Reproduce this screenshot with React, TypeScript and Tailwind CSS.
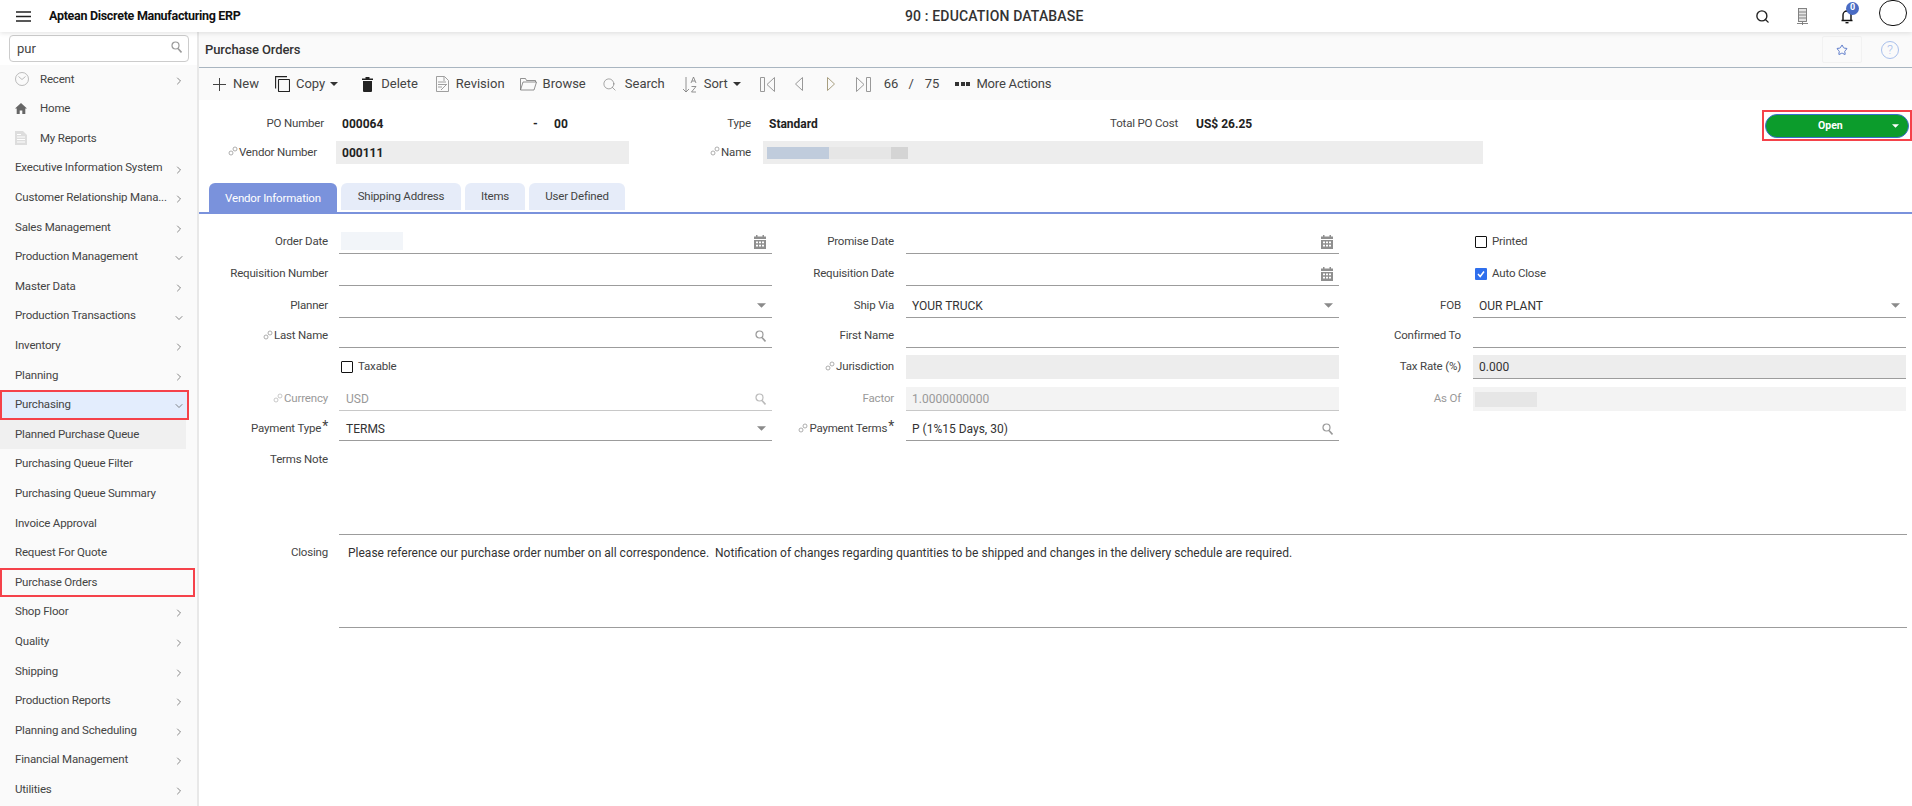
import React from "react";
import { Search, ChevronRight, ChevronDown, Star } from "lucide-react";

const Link = ({ c = "#9a9a9a" }: { c?: string }) => (
  <svg width="10" height="10" viewBox="0 0 10 10" className="mr-px mb-[3px] shrink-0" fill="none" stroke={c} strokeWidth="0.8">
    <circle cx="3" cy="7" r="2" />
    <circle cx="7" cy="3" r="2" />
  </svg>
);
const Caret = ({ c = "#333", className = "" }: { c?: string; className?: string }) => (
  <svg width="8" height="4" viewBox="0 0 8 4" className={className}><path d="M0 0h8L4 4z" fill={c} /></svg>
);
const Cal = () => (
  <svg width="12" height="14" viewBox="0 0 12 14" fill="#8f8f8f">
    <path d="M2 0h1.5v2H2zM8.500 0H10v2H8.500zM0 1.500h12V4H0zM0 5h12v9H0z" />
    <path d="M2 6.500h2v1.800H2zM5 6.500h2v1.800H5zM8 6.500h2v1.800H8zM2 9.800h2v1.800H2zM5 9.800h2v1.800H5zM8 9.800h2v1.800H8z" fill="#fff" />
  </svg>
);
const Drop = () => <Caret c="#8a8a8a" className="w-[9px] h-[5px]" />;
const Mag = ({ c = "#9a9a9a" }: { c?: string }) => (
  <svg width="11" height="12" viewBox="0 0 11 12" fill="none" stroke={c} strokeWidth="1.200"><circle cx="4.500" cy="4.500" r="3.500" /><path d="M7 7.500l3.500 4" strokeWidth="1.600" /></svg>
);

type Row = { t: string; arrow?: "r" | "d"; icon?: React.ReactNode; cls?: string };
const Clock = () => (
  <svg width="14" height="14" viewBox="0 0 14 14" fill="none" stroke="#aaa" strokeWidth="0.8"><circle cx="7" cy="7" r="6.500" /><path d="M3.500 4.500L7 7.500l3.500-3" /></svg>
);
const HomeI = () => (
  <svg width="12" height="11" viewBox="0 0 12 11" fill="#666"><path d="M6 0L0 5.500h1.700V11h3V7.500h2.600V11h3V5.500H12z" /></svg>
);
const Rep = () => (
  <svg width="12" height="14" viewBox="0 0 12 14"><path d="M0 0h8l4 4v10H0z" fill="#ddd" /><path d="M2 6h8M2 8.500h8M2 11h8M2 3.500h4" stroke="#fff" /></svg>
);
const rows: Row[] = [
  { t: "Recent", arrow: "r", icon: <Clock /> },
  { t: "Home", icon: <HomeI /> },
  { t: "My Reports", icon: <Rep /> },
  { t: "Executive Information System", arrow: "r" },
  { t: "Customer Relationship Mana...", arrow: "r" },
  { t: "Sales Management", arrow: "r" },
  { t: "Production Management", arrow: "d" },
  { t: "Master Data", arrow: "r" },
  { t: "Production Transactions", arrow: "d" },
  { t: "Inventory", arrow: "r" },
  { t: "Planning", arrow: "r" },
  { t: "Purchasing", arrow: "d", cls: "pur" },
  { t: "Planned Purchase Queue", cls: "planned" },
  { t: "Purchasing Queue Filter" },
  { t: "Purchasing Queue Summary" },
  { t: "Invoice Approval" },
  { t: "Request For Quote" },
  { t: "Purchase Orders", cls: "po" },
  { t: "Shop Floor", arrow: "r" },
  { t: "Quality", arrow: "r" },
  { t: "Shipping", arrow: "r" },
  { t: "Production Reports", arrow: "r" },
  { t: "Planning and Scheduling", arrow: "r" },
  { t: "Financial Management", arrow: "r" },
  { t: "Utilities", arrow: "r" },
];

function SideRow({ r }: { r: Row }) {
  const sel =
    r.cls === "pur"
      ? "w-[189px] bg-[#e3edfd] border-2 border-[#f5424a]"
      : r.cls === "planned"
      ? "w-[186px] bg-[#f0f0f0] border-2 border-transparent"
      : r.cls === "po"
      ? "w-[195px] border-2 border-[#f5424a]"
      : "w-[189px] border-2 border-transparent";
  return (
    <div className={`h-[29.6px] flex items-center pl-[13px] pr-[2px] shrink-0 ${sel}`}>
      {r.icon && <span className="w-[25px] shrink-0 flex">{r.icon}</span>}
      <span className="flex-1 whitespace-nowrap text-[11.5px] tracking-[-0.18px] text-[#444]">{r.t}</span>
      {r.arrow === "r" && <ChevronRight size={12} strokeWidth={1.400} color="#555" className="mt-[3px]" />}
      {r.arrow === "d" && <ChevronDown size={12} strokeWidth={1.400} color="#555" className="mt-[3px]" />}
    </div>
  );
}

const Btn = ({ icon, t, ml, caret }: { icon: React.ReactNode; t: string; ml: string; caret?: boolean }) => (
  <div className={`flex items-center ${ml}`}>
    {icon}
    <span className="text-[13px] text-[#444] whitespace-nowrap">{t}</span>
    {caret && <Caret className="ml-[5px]" />}
  </div>
);

const Lab = ({ t, w, link, req, dis }: { t: string; w: string; link?: boolean; req?: boolean; dis?: boolean }) => (
  <div className={`${w} shrink-0 flex items-center justify-end text-[11.5px] tracking-[-0.18px] whitespace-nowrap ${dis ? "text-[#999]" : "text-[#444]"}`}>
    {link && <Link c={dis ? "#bbb" : "#999"} />}
    <span>{t}</span>
    {req && <span className="text-[14px] leading-[10px] self-start mt-[4px] ml-px">*</span>}
  </div>
);

type FP = { label?: string; link?: boolean; req?: boolean; dis?: boolean; v?: React.ReactNode; right?: React.ReactNode; bg?: string; line?: string; first?: boolean };
function Cell({ label, link, req, dis, v, right, bg = "", line = "border-b border-[#9c9c9c]", first }: FP) {
  return (
    <div className="flex h-[24px]">
      <Lab t={label ?? ""} w={first ? "w-[129px]" : "w-[122px]"} link={link} req={req} dis={dis} />
      <div className={`${first ? "ml-[11px] pl-[7px]" : "ml-[12px] pl-[6px]"} w-[433px] flex items-center justify-between pr-[6px] text-[12px] ${dis ? "text-[#999]" : "text-[#333]"} ${bg} ${line}`}>
        <span className="whitespace-nowrap">{v}</span>
        {right}
      </div>
    </div>
  );
}
const Check = ({ on, t }: { on?: boolean; t: string }) => (
  <div className="flex items-center h-[24px] ml-[1px]">
    {on ? (
      <span className="w-[12px] h-[12px] bg-[#2f6fed] rounded-[1px] flex items-center justify-center">
        <svg width="10" height="10" viewBox="0 0 10 10" fill="none" stroke="#fff" strokeWidth="1.500"><path d="M2 5l2.200 2.500L8 2.500" /></svg>
      </span>
    ) : (
      <span className="w-[12px] h-[12px] border border-[#111] rounded-[1px]" />
    )}
    <span className="ml-[5px] text-[11.5px] tracking-[-0.18px] text-[#444]">{t}</span>
  </div>
);

export default function App() {
  return (
    <div className="h-screen w-full overflow-hidden flex flex-col bg-white" style={{ fontFamily: "Roboto, sans-serif" }}>
      <header className="h-[32px] shrink-0 flex items-center relative z-10 bg-white shadow-[0_1px_5px_rgba(0,0,0,0.12)]">
        <svg width="15" height="11" viewBox="0 0 15 11" stroke="#222" strokeWidth="1.500" className="ml-[16px]"><path d="M0 1h15M0 5.500h15M0 10h15" /></svg>
        <span className="ml-[18px] w-[680px] text-[12.500px] font-bold tracking-[-0.3px] text-[#111] whitespace-nowrap">Aptean Discrete Manufacturing ERP</span>
        <span className="ml-[176px] text-[14px] font-medium tracking-[0.15px] text-[#333] whitespace-nowrap">90 : EDUCATION DATABASE</span>
        <div className="ml-auto flex items-center">
          <Search size={15} strokeWidth={2.200} color="#222" />
          <svg width="13" height="17" viewBox="0 0 13 17" className="ml-[26px]" fill="#e4e4e4" stroke="#777" strokeWidth="0.9"><rect x="2.500" y="0.500" width="8" height="13" /><path d="M3 4h7M3 7h7M3 10h7M6.500 14v3M1 15.500h11" /></svg>
          <div className="relative ml-[31px]">
            <svg width="14" height="15" viewBox="0 0 14 15" fill="none" stroke="#111" strokeWidth="1.400"><path d="M3 11V6a4 4 0 018 0v5M1.500 11.500h11" /><path d="M5.500 13.700h3" /></svg>
            <span className="absolute -top-[7px] left-[6px] w-[13px] h-[13px] rounded-full bg-[#4a6cc4] text-white text-[9px] font-bold flex items-center justify-center">0</span>
          </div>
          <span className="ml-[25px] mr-[5px] -mt-[6px] w-[28px] h-[26px] rounded-full border border-[#111] bg-white" />
        </div>
      </header>
      <div className="flex-1 flex min-h-0">
        <aside className="w-[199px] shrink-0 bg-[#fafafa] border-r-2 border-[#e8e8e8] flex flex-col overflow-hidden">
          <div className="bg-white h-[32.5px] shrink-0 pt-[3px] pl-[9px] w-[197px]">
            <div className="w-[180px] h-[27px] border border-[#ccc] rounded-[4px] flex items-center justify-between pl-[7px] pr-[6px] bg-white">
              <span className="text-[13px] text-[#444]">pur</span>
              <span className="-mt-[4px]"><Mag c="#999" /></span>
            </div>
          </div>
          {rows.map((r) => (
            <SideRow key={r.t} r={r} />
          ))}
        </aside>
        <main className="flex-1 min-w-0 flex flex-col">
          <div className="h-[36px] shrink-0 bg-[#fafafa] border-b border-[#a9b5c0] flex items-center pl-[6px] pr-[13px]">
            <span className="text-[13px] font-medium tracking-[-0.1px] text-[#333]">Purchase Orders</span>
            <div className="ml-auto w-[40px] h-[27px] border border-[#f2f2f2] rounded-[2px] flex items-center justify-center">
              <Star size={12} strokeWidth={1.800} color="#4a6cc4" />
            </div>
            <span className="ml-[19px] w-[18px] h-[18px] rounded-full border border-[#a9c0ec] text-[#a9c0ec] text-[13px] font-light flex items-center justify-center">?</span>
          </div>
          <div className="h-[32px] shrink-0 bg-[#fafafa] flex items-center">
            <Btn ml="ml-[14px]" t="New" icon={<svg width="13" height="13" viewBox="0 0 13 13" stroke="#444" className="mr-[7px]"><path d="M6.500 0v13M0 6.500h13" /></svg>} />
            <Btn ml="ml-[16px]" t="Copy" caret icon={<svg width="15" height="16" viewBox="0 0 15 16" fill="none" stroke="#222" strokeWidth="1.100" className="mr-[6px]"><path d="M12 .6H.6V12.500" /><rect x="3.500" y="3.500" width="11" height="12" rx="0.500" /></svg>} />
            <Btn ml="ml-[24px]" t="Delete" icon={<svg width="11" height="15" viewBox="0 0 11 15" fill="#222" className="mr-[8px]"><path d="M3.500 0h4v1.500H11V3H0V1.500h3.500zM1 4h9v10a1 1 0 01-1 1H2a1 1 0 01-1-1z" /></svg>} />
            <Btn ml="ml-[18px]" t="Revision" icon={<svg width="13" height="16" viewBox="0 0 13 16" fill="none" stroke="#888" strokeWidth="0.800" className="mr-[7px]"><path d="M.500.500h8l4 4v11H.500zM2 6h8M2 8.500h8M2 11h4M8 5V1M5 14l6-6" /></svg>} />
            <Btn ml="ml-[15.500px]" t="Browse" icon={<svg width="17" height="14" viewBox="0 0 17 14" fill="none" stroke="#777" strokeWidth="0.800" className="mr-[5.500px]"><path d="M.500 13V1.500h5l1 2h9V5M.500 13L3 5h13.500L14 13z" /></svg>} />
            <Btn ml="ml-[16px]" t="Search" icon={<Search size={15} strokeWidth={0.900} color="#666" className="mr-[8px]" />} />
            <Btn ml="ml-[17px]" t="Sort" caret icon={<svg width="15" height="17" viewBox="0 0 15 17" fill="none" stroke="#777" strokeWidth="0.800" className="mr-[7px]"><path d="M4 1v15M1 13l3 3 3-3M9 7l2.500-6L14 7M10 5h3M9.500 10.500H14L9.500 16H14" /></svg>} />
            <svg width="15" height="15" viewBox="0 0 15 15" fill="none" stroke="#999" className="ml-[19px]"><path d="M.500.500h4v14h-4zM14.500.500L7 7.500l7.500 7z" /></svg>
            <svg width="8" height="14" viewBox="0 0 8 14" fill="none" stroke="#999" className="ml-[20px]"><path d="M7.500.500L.500 7l7 6.500z" /></svg>
            <svg width="8" height="14" viewBox="0 0 8 14" fill="none" stroke="#a89f80" className="ml-[24px]"><path d="M.500.500L7.500 7l-7 6.500z" /></svg>
            <svg width="15" height="15" viewBox="0 0 15 15" fill="none" stroke="#999" className="ml-[21px]"><path d="M.500.500L8 7.500l-7.500 7zM10.500.500h4v14h-4z" /></svg>
            <span className="ml-[13px] text-[13px] text-[#444]">66</span>
            <span className="ml-[10px] text-[13px] text-[#444]">/</span>
            <span className="ml-[11px] text-[13px] text-[#444]">75</span>
            <span className="ml-[16px] flex gap-[1.500px]"><i className="w-[4px] h-[4px] bg-[#333]" /><i className="w-[4px] h-[4px] bg-[#333]" /><i className="w-[4px] h-[4px] bg-[#333]" /></span>
            <span className="ml-[6px] text-[13px] tracking-[-0.2px] text-[#444] whitespace-nowrap">More Actions</span>
          </div>
          <div className="pt-[10px] shrink-0">
            <div className="flex h-[31px] pb-[3px] items-center relative">
              <Lab t="PO Number" w="w-[125px]" />
              <span className="ml-[18px] w-[191px] text-[12px] font-bold text-[#222]">000064</span>
              <span className="w-[21px] text-[12px] font-bold text-[#222]">-</span>
              <span className="w-[70px] text-[12px] font-bold text-[#222]">00</span>
              <Lab t="Type" w="w-[127px]" />
              <span className="ml-[18px] w-[205px] text-[12px] font-bold text-[#222]">Standard</span>
              <Lab t="Total PO Cost" w="w-[204px]" />
              <span className="ml-[18px] text-[12px] font-bold text-[#222]">US$ 26.25</span>
              <div className="ml-auto h-[31px] w-[150px] border-2 border-[#f5424a] mt-[3px] flex items-center justify-center">
                <div className="w-[144px] h-[24px] rounded-full bg-[#0c9c2c] border border-[#3d6fd0] flex items-center pl-[52px] pr-[9px] justify-between">
                  <span className="text-[10.500px] font-bold text-white">Open</span>
                  <Caret c="#fff" className="w-[7px]" />
                </div>
              </div>
            </div>
            <div className="flex h-[23px]">
              <Lab t="Vendor Number" w="w-[118px]" link />
              <div className="ml-[19px] w-[293px] bg-[#ededed] flex items-center pl-[6px] text-[12px] font-bold text-[#222]">000111</div>
              <Lab t="Name" w="w-[122px]" link />
              <div className="ml-[12px] w-[720px] bg-[#ededed] flex items-center pl-[4px]">
                <i className="w-[62px] h-[12px] bg-[#c0ccdc]" />
                <i className="w-[62px] h-[12px] bg-[#e6e6e6]" />
                <i className="w-[17px] h-[12px] bg-[#d4d4d4]" />
              </div>
            </div>
          </div>
          <div className="mt-[19px] h-[31px] shrink-0 flex items-stretch gap-[4px] pl-[10px] border-b-2 border-[#7a92dc] text-[11.500px] tracking-[-0.18px] text-[#444]">
            <div className="w-[128px] -mb-[2px] bg-[#7a92dc] text-white rounded-t-[6px] flex items-center justify-center">Vendor Information</div>
            <div className="w-[120px] h-[27px] bg-[#e6ecf9] rounded-t-[6px] flex items-center justify-center">Shipping Address</div>
            <div className="w-[60px] h-[27px] bg-[#e6ecf9] rounded-t-[6px] flex items-center justify-center">Items</div>
            <div className="w-[96px] h-[27px] bg-[#e6ecf9] rounded-t-[6px] flex items-center justify-center">User Defined</div>
          </div>
          <div className="pt-[16px] flex flex-col">
            <div className="flex">
              <Cell first label="Order Date" v={<i className="block w-[62px] h-[18px] -ml-[5px] -mt-[2px] bg-[#f2f5f9]" />} right={<Cal />} />
              <Cell label="Promise Date" right={<Cal />} />
              <div className="ml-[135px]"><Check t="Printed" /></div>
            </div>
            <div className="flex mt-[8px]">
              <Cell first label="Requisition Number" />
              <Cell label="Requisition Date" right={<Cal />} />
              <div className="ml-[135px]"><Check on t="Auto Close" /></div>
            </div>
            <div className="flex mt-[8px]">
              <Cell first label="Planner" right={<Drop />} />
              <Cell label="Ship Via" v="YOUR TRUCK" right={<Drop />} />
              <Cell label="FOB" v="OUR PLANT" right={<Drop />} />
            </div>
            <div className="flex mt-[6px]">
              <Cell first label="Last Name" link right={<Mag />} />
              <Cell label="First Name" />
              <Cell label="Confirmed To" />
            </div>
            <div className="flex mt-[7px]">
              <div className="w-[573px] pl-[141px]"><Check t="Taxable" /></div>
              <Cell label="Jurisdiction" link bg="bg-[#ededed]" line="" />
              <Cell label="Tax Rate (%)" v="0.000" bg="bg-[#ededed]" />
            </div>
            <div className="flex mt-[8px]">
              <Cell first dis label="Currency" link v="USD" right={<Mag c="#bbb" />} line="border-b border-[#c8c8c8]" />
              <Cell dis label="Factor" v="1.0000000000" bg="bg-[#f3f3f3]" line="border-b border-[#c8c8c8]" />
              <Cell dis label="As Of" bg="bg-[#f3f3f3]" line="" v={<i className="block w-[62px] h-[15px] -ml-[4px] bg-[#e6e6e6]" />} />
            </div>
            <div className="flex mt-[6px]">
              <Cell first req label="Payment Type" v="TERMS" right={<Drop />} />
              <Cell req link label="Payment Terms" v="P (1%15 Days, 30)" right={<Mag />} />
            </div>
            <div className="flex h-[94px]">
              <div className="w-[129px] text-right text-[11.500px] tracking-[-0.18px] text-[#444] pt-[10px]">Terms Note</div>
              <div className="ml-[11px] w-[1568px] border-b border-[#9c9c9c]" />
            </div>
            <div className="flex h-[93px]">
              <div className="w-[129px] text-right text-[11.500px] tracking-[-0.18px] text-[#444] pt-[9px]">Closing</div>
              <div className="ml-[11px] w-[1568px] border-b border-[#9c9c9c] pl-[9px] pt-[9px] text-[12px] text-[#333] whitespace-pre">Please reference our purchase order number on all correspondence.  Notification of changes regarding quantities to be shipped and changes in the delivery schedule are required.</div>
            </div>
          </div>
        </main>
      </div>
    </div>
  );
}
